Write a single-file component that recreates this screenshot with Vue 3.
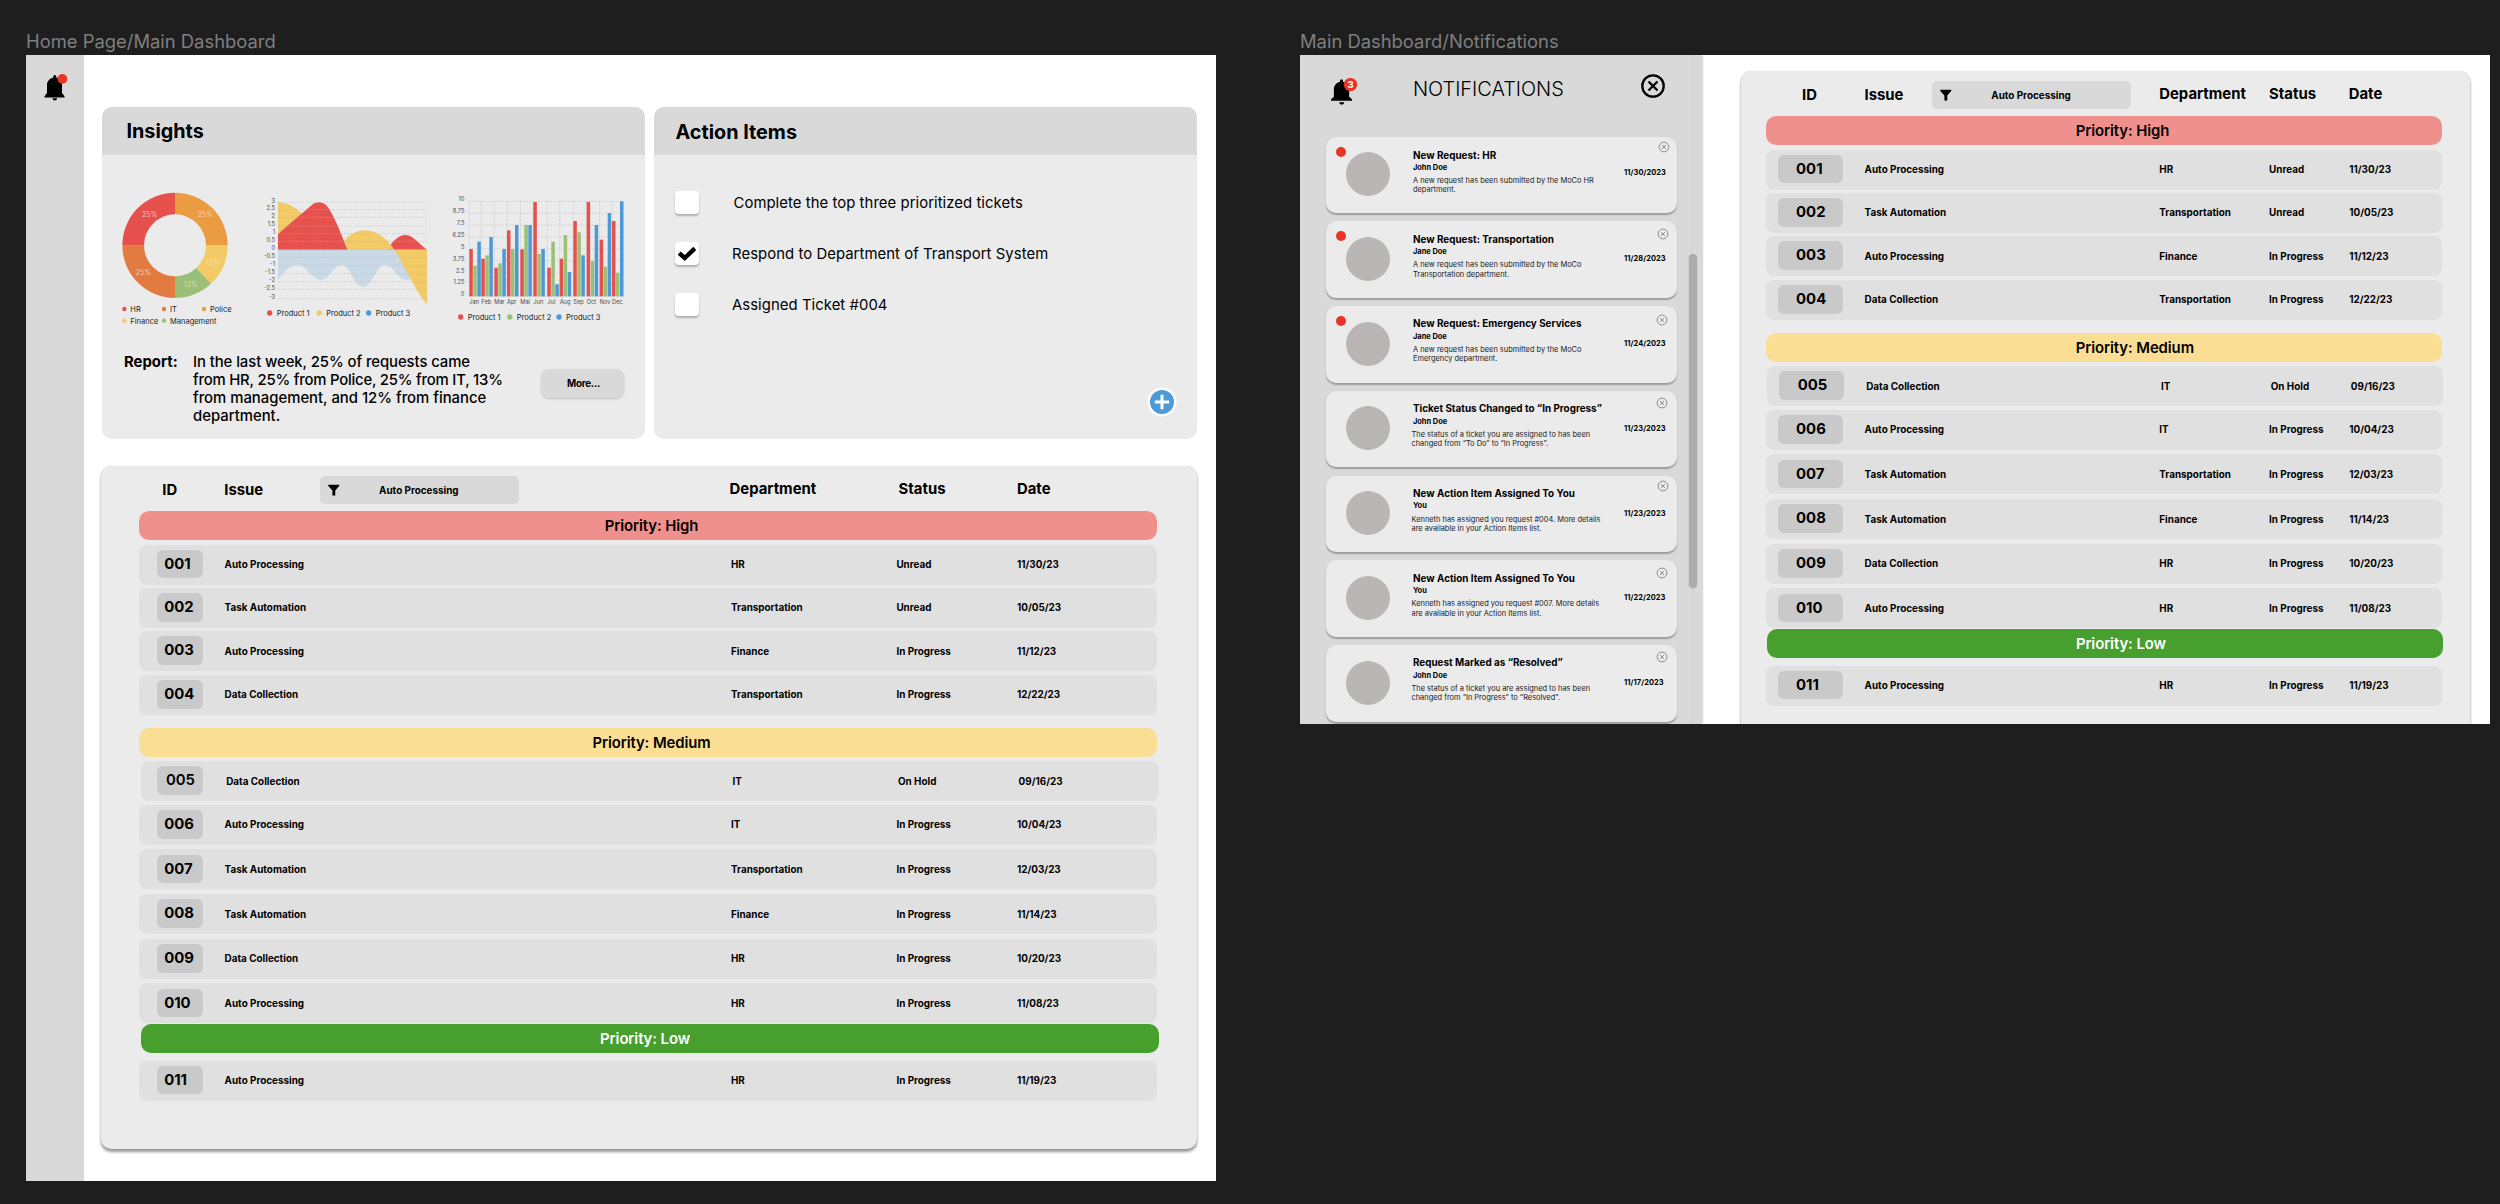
<script setup>
const tickets = [
  { kind: 'bar', tone: 'high', label: 'Priority: High', gap: 0 },
  { id: '001', issue: 'Auto Processing', dept: 'HR', status: 'Unread', date: '11/30/23', gap: 4.5 },
  { id: '002', issue: 'Task Automation', dept: 'Transportation', status: 'Unread', date: '10/05/23', gap: 3.4 },
  { id: '003', issue: 'Auto Processing', dept: 'Finance', status: 'In Progress', date: '11/12/23', gap: 3.4 },
  { id: '004', issue: 'Data Collection', dept: 'Transportation', status: 'In Progress', date: '12/22/23', gap: 3.4 },
  { kind: 'bar', tone: 'medium', label: 'Priority: Medium', gap: 13 },
  { id: '005', issue: 'Data Collection', dept: 'IT', status: 'On Hold', date: '09/16/23', gap: 4.6, shifted: true },
  { id: '006', issue: 'Auto Processing', dept: 'IT', status: 'In Progress', date: '10/04/23', gap: 3.4 },
  { id: '007', issue: 'Task Automation', dept: 'Transportation', status: 'In Progress', date: '12/03/23', gap: 4.7 },
  { id: '008', issue: 'Task Automation', dept: 'Finance', status: 'In Progress', date: '11/14/23', gap: 4.7 },
  { id: '009', issue: 'Data Collection', dept: 'HR', status: 'In Progress', date: '10/20/23', gap: 4.7 },
  { id: '010', issue: 'Auto Processing', dept: 'HR', status: 'In Progress', date: '11/08/23', gap: 4.7 },
  { kind: 'bar', tone: 'low', label: 'Priority: Low', gap: 1, shifted: true },
  { id: '011', issue: 'Auto Processing', dept: 'HR', status: 'In Progress', date: '11/19/23', gap: 7.2 },
]

const frames = [
  { name: 'home', title: 'Home Page/Main Dashboard' },
  { name: 'notes', title: 'Main Dashboard/Notifications' },
]

const todos = [
  { text: 'Complete the top three prioritized tickets', done: false, nudge: true },
  { text: 'Respond to Department of Transport System', done: true },
  { text: 'Assigned Ticket #004', done: false },
]

const notifications = [
  { title: 'New Request: HR', by: 'John Doe', l1: 'A new request has been submitted by the MoCo HR', l2: 'department.', date: '11/30/2023', unread: true, lift: 'first' },
  { title: 'New Request: Transportation', by: 'Jane Doe', l1: 'A new request has been submitted by the MoCo', l2: 'Transportation department.', date: '11/28/2023', unread: true, lift: 'second' },
  { title: 'New Request: Emergency Services', by: 'Jane Doe', l1: 'A new request has been submitted by the MoCo', l2: 'Emergency department.', date: '11/24/2023', unread: true, lift: 'third' },
  { title: 'Ticket Status Changed to “In Progress”', by: 'John Doe', l1: 'The status of a ticket you are assigned to has been', l2: 'changed from “To Do” to “In Progress”.', date: '11/23/2023' },
  { title: 'New Action Item Assigned To You', by: 'You', l1: 'Kenneth has assigned you request #004. More details', l2: 'are available in your Action Items list.', date: '11/23/2023', lift: 'fifth' },
  { title: 'New Action Item Assigned To You', by: 'You', l1: 'Kenneth has assigned you request #007. More details', l2: 'are available in your Action Items list.', date: '11/22/2023' },
  { title: 'Request Marked as “Resolved”', by: 'John Doe', l1: 'The status of a ticket you are assigned to has been', l2: 'changed from “In Progress” to “Resolved”.', date: '11/17/2023' },
]

const point = (r, deg) => {
  const a = ((deg - 90) * Math.PI) / 180
  return `${(224 + r * Math.cos(a)).toFixed(2)} ${(226 + r * Math.sin(a)).toFixed(2)}`
}
const arc = (from, to) =>
  `M${point(158, from)}A158 158 0 0 1 ${point(158, to)}L${point(93, to)}A93 93 0 0 0 ${point(93, from)}Z`
const slices = [
  { d: arc(0, 90), color: '#ec9c40', label: '25%', x: 315, y: 134 },
  { d: arc(90, 137), color: '#f2ca66', label: '12%', x: 338, y: 278 },
  { d: arc(137, 180), color: '#9abf77', label: '13%', x: 271, y: 342 },
  { d: arc(180, 270), color: '#e37b40', label: '25%', x: 129, y: 306 },
  { d: arc(270, 360), color: '#e6514d', label: '25%', x: 148, y: 134 },
]
const donutLegend = [
  { label: 'HR', color: '#e6514d', x: 72, y: 418 },
  { label: 'IT', color: '#e37b40', x: 191, y: 418 },
  { label: 'Police', color: '#ec9c40', x: 311, y: 418 },
  { label: 'Finance', color: '#f2ca66', x: 72, y: 453 },
  { label: 'Management', color: '#9abf77', x: 191, y: 453 },
]

const areaTicks = [
  ['3', 97], ['2.5', 119], ['2', 142], ['1.5', 168], ['1', 191], ['0.5', 214], ['0', 238],
  ['-0.5', 262], ['-1', 287], ['-1.5', 311], ['-2', 335], ['-2.5', 358], ['-3', 386],
]
const barTicks = ['10', '8.75', '7.5', '6.25', '5', '3.75', '2.5', '1.25', '0']
const months = [
  ['Jan', 147, [237, 287, 215]], ['Feb', 183, [266, 256, 201]], ['Mar', 222, [293, 280, 237]],
  ['Apr', 260, [181, 237, 165]], ['Mai', 300, [238, 165, 165]], ['Jun', 339, [96, 252, 237]],
  ['Jul', 381, [293, 215, 343]], ['Aug', 418, [266, 195, 306]], ['Sep', 459, [153, 187, 256]],
  ['Oct', 499, [96, 273, 165]], ['Nov', 538, [209, 290, 129]], ['Dec', 575, [153, 309, 94]],
]
const barColors = ['#e6514d', '#9abf77', '#4d98d6']
const products = ['Product 1', 'Product 2', 'Product 3']
</script>

<template>
  <div class="canvas">
    <section v-for="f in frames" :key="f.name" class="artboard" :class="f.name">
      <div class="artboard-name">{{ f.title }}</div>
      <div class="frame">
        <aside v-if="f.name === 'home'" class="rail">
          <svg class="bell" viewBox="0 0 24 28">
            <path d="M8.300 2.600a1.500 1.500 0 0 1 3 0v1C14.900 4.500 17 7.600 17 11v8l2.500 3.200v1.300H-.500v-1.300L2 19v-8C2 7.600 4.700 4.500 8.300 3.600zM7.500 24.300h4.600a2.300 2.300 0 0 1-4.600 0z" />
            <ellipse cx="17.400" cy="4.900" rx="4.900" ry="4.900" fill="#ea3424" />
          </svg>
        </aside>

        <aside v-else class="drawer">
          <header class="drawer-head">
            <svg class="bell" viewBox="0 0 28 28">
              <path d="M10 2.800a1.500 1.500 0 0 1 3 0v1C16.700 4.700 19.200 7.700 19.200 11.500v7.300l2.800 2.400v1.500H1v-1.500l2.900-2.400v-7.300C3.900 7.700 6.300 4.700 10 3.800zM9.200 24.200h5a2.500 2.500 0 0 1-5 0z" />
              <circle cx="20.500" cy="6.600" r="6.700" fill="#ea3424" />
              <text x="20.500" y="10" text-anchor="middle" class="bell-count">3</text>
            </svg>
            <h2>NOTIFICATIONS</h2>
            <svg class="dismiss" viewBox="0 0 24 24">
              <circle cx="12" cy="12" r="10.700" />
              <path d="M7.500 7.500l9 9M16.500 7.500l-9 9" />
            </svg>
          </header>
          <ul class="notes-list">
            <li v-for="(n, i) in notifications" :key="i" class="note" :class="n.lift">
              <i v-if="n.unread" class="dot"></i>
              <span class="avatar"></span>
              <div class="note-text">
                <h3>{{ n.title }}</h3>
                <h4>{{ n.by }}</h4>
                <p :class="{ out: i > 2 }">{{ n.l1 }}<br />{{ n.l2 }}</p>
              </div>
              <time>{{ n.date }}</time>
              <svg class="note-x" viewBox="0 0 12 12">
                <circle cx="6" cy="6" r="4.900" />
                <path d="M4 4l4 4M8 4l-4 4" />
              </svg>
            </li>
          </ul>
          <div class="track"><div class="thumb"></div></div>
        </aside>

        <main>
          <div v-if="f.name === 'home'" class="cards">
            <article class="card">
              <h2 class="card-title">Insights</h2>
              <div class="charts">
                <svg class="chart donut" viewBox="50 60 350 410">
                  <path v-for="(s, i) in slices" :key="i" :d="s.d" :fill="s.color" />
                  <text v-for="(s, i) in slices" :key="'t' + i" :x="s.x" :y="s.y + 8" class="pct">{{ s.label }}</text>
                  <g v-for="l in donutLegend" :key="l.label">
                    <circle :cx="l.x" :cy="l.y - 1" r="6.500" :fill="l.color" />
                    <text :x="l.x + 18" :y="l.y + 9" class="key">{{ l.label }}</text>
                  </g>
                </svg>
                <svg class="chart area" viewBox="490 60 500 410">
                  <path fill="#f2ca66" d="M535 97C562 97 585 110 608 132L720 239H535Z" />
                  <path fill="#c9dae6" d="M535 239V330C550 310 568 285 594 285C622 285 636 330 664 330C690 330 700 285 726 285C752 285 762 351 790 351C820 351 828 285 856 285C884 285 892 330 920 330L940 328L900 239Z" />
                  <path fill="#e6514d" d="M535 192L640 102C652 94 668 94 680 106C706 138 722 190 744 239H535Z" />
                  <path fill="#e6514d" d="M862 239C880 214 895 195 918 195C940 195 958 222 982 239Z" />
                  <path fill="#f2ca66" d="M734 212C752 192 770 181 796 181C835 181 866 212 884 239H982V403C958 376 940 340 925 311C908 280 895 256 884 239H744Z" />
                  <line v-for="t in areaTicks" :key="t[0]" x1="536" x2="982" :y1="t[1]" :y2="t[1]" class="grid" />
                  <text v-for="t in areaTicks" :key="'l' + t[0]" x="526" :y="t[1] + 1" class="tick">{{ t[0] }}</text>
                  <g v-for="(p, i) in products" :key="p">
                    <circle :cx="510 + i * 148.500" cy="429" r="8" :fill="['#e6514d', '#f2ca66', '#4d98d6'][i]" />
                    <text :x="531 + i * 148.500" y="437" class="key">{{ p }}</text>
                  </g>
                </svg>
                <svg class="chart bars" viewBox="80 60 540 410">
                  <line v-for="(t, i) in barTicks" :key="t" x1="147" x2="609" :y1="94 + i * 35.600" :y2="94 + i * 35.600" class="grid" />
                  <line v-for="m in months" :key="m[0]" :x1="m[1]" :x2="m[1]" y1="94" y2="379" class="grid" />
                  <text v-for="(t, i) in barTicks" :key="'l' + t" x="132" :y="94 + i * 35.600" class="tick">{{ t }}</text>
                  <g v-for="m in months" :key="'b' + m[0]">
                    <rect v-for="(y, k) in m[2]" :key="k" :x="m[1] + k * 12" :y="y" width="10.500" :height="379 - y" :fill="barColors[k]" />
                    <text :x="m[1]" y="403" class="month">{{ m[0] }}</text>
                  </g>
                  <g v-for="(p, i) in products" :key="p">
                    <circle :cx="121 + i * 147.500" cy="441" r="8" :fill="barColors[i]" />
                    <text :x="142 + i * 147.500" y="450" class="key">{{ p }}</text>
                  </g>
                </svg>
              </div>
              <div class="report">
                <strong>Report:</strong>
                <p>
                  <span class="snug">In the last week, 25% of requests came</span>
                  <span class="tight">from HR, 25% from Police, 25% from IT, 13%</span>
                  <span>from management, and 12% from finance</span>
                  <span>department.</span>
                </p>
                <button class="more">More...</button>
              </div>
            </article>

            <article class="card">
              <h2 class="card-title actions-title">Action Items</h2>
              <ul class="todos">
                <li v-for="t in todos" :key="t.text">
                  <span class="check">
                    <svg v-if="t.done" viewBox="0 0 24 24"><path d="M2.700 12.700L5.600 9.600L9.800 13.100L18.300 4.800L21.300 8L9.800 19Z" /></svg>
                  </span>
                  <span :class="{ nudge: t.nudge }">{{ t.text }}</span>
                </li>
              </ul>
              <svg class="add" viewBox="0 0 30 30">
                <circle cx="15" cy="15" r="14.500" fill="#fff" />
                <circle cx="15" cy="15" r="12" fill="#4d9ad9" />
                <path d="M15 7.800v14.400M7.800 15h14.400" stroke="#fff" stroke-width="3" />
              </svg>
            </article>
          </div>

          <div class="board">
            <div class="board-head">
              <span>ID</span>
              <span>Issue</span>
              <div class="filter">
                <svg viewBox="0 0 12 12"><path d="M.3.500h11.400v1.300L7.600 6.600v5.200H4.600V6.600L.3 1.800z" /></svg>
                <span>Auto Processing</span>
              </div>
              <span class="up">Department</span>
              <span class="up">Status</span>
              <span class="up">Date</span>
            </div>
            <div
              v-for="t in tickets"
              :key="t.id || t.label"
              :class="[t.kind === 'bar' ? 'priority' : 'row', t.tone, { shifted: t.shifted }]"
              :style="{ marginTop: t.gap + 'px' }"
            >
              <span v-if="t.kind === 'bar'">{{ t.label }}</span>
              <template v-else>
                <b class="chip"><span>{{ t.id }}</span></b>
                <span>{{ t.issue }}</span>
                <span>{{ t.dept }}</span>
                <span>{{ t.status }}</span>
                <span>{{ t.date }}</span>
              </template>
            </div>
          </div>
        </main>
      </div>
    </section>
  </div>
</template>

<style>
body {
  margin: 0;
  background: #1e1e1e;
}
</style>

<style scoped>
.canvas {
  box-sizing: border-box;
  width: 2500px;
  height: 1204px;
  padding: 27px 10px 0 26px;
  display: flex;
  gap: 84px;
  align-items: flex-start;
  background: #1e1e1e;
  font-family: Inter, "Liberation Sans", sans-serif;
  color: #000;
  overflow: hidden;
}
.canvas *,
.canvas *::before {
  box-sizing: border-box;
}
h2, h3, h4, p, ul {
  margin: 0;
  padding: 0;
  list-style: none;
}
.artboard {
  width: 1190px;
}
.artboard-name {
  height: 28px;
  line-height: 28px;
  font-size: 18.400px;
  color: #7f7f7f;
  white-space: nowrap;
}
.frame {
  display: flex;
  background: #fff;
  overflow: hidden;
}
.home .frame {
  height: 1126px;
}
.notes .frame {
  height: 669px;
}
.rail {
  width: 58px;
  background: #d9d9d9;
  padding: 19px 0 0 19px;
}
.rail .bell {
  width: 24px;
  height: 28px;
  display: block;
  overflow: visible;
}
main {
  flex: 1;
  min-width: 0;
}
.home main {
  padding: 51.500px 19px 0 17px;
}
.notes main {
  padding: 16px 20.500px 0 38.500px;
}

/* summary cards */
.cards {
  display: flex;
  gap: 9.500px;
  height: 332px;
  margin: 0 0 27.500px .500px;
}
.card {
  flex: 1;
  position: relative;
  display: flex;
  flex-direction: column;
  background: #ebebeb;
  border-radius: 10px;
  overflow: hidden;
}
.card-title {
  height: 48.500px;
  padding-left: 25px;
  background: #d9d9d9;
  font-size: 19.800px;
  font-weight: 700;
  line-height: 48px;
}
.actions-title {
  padding-left: 21.500px;
  line-height: 50px;
}
.charts {
  display: flex;
  padding: 35px 0 0 15.200px;
}
.chart {
  height: 136.700px;
  flex: none;
  font-family: Inter, sans-serif;
}
.donut { width: 116.700px; }
.area { width: 166.700px; margin-left: 30px; }
.bars { width: 180px; margin-left: 16.700px; }
.pct {
  font-size: 21px;
  fill: #ebe3d8;
  fill-opacity: .8;
  text-anchor: middle;
}
.key {
  font-size: 22.500px;
  fill: #222;
}
.tick {
  font-size: 17px;
  fill: #4a4a4a;
  text-anchor: end;
}
.month {
  font-size: 17px;
  fill: #4a4a4a;
}
.grid {
  stroke: #b4b4b4;
  stroke-opacity: .75;
  stroke-width: 2;
  stroke-dasharray: 5 4;
}
.report {
  display: flex;
  padding: 26.800px 0 0 22.500px;
  font-size: 14.870px;
  line-height: 18px;
}
.report strong {
  width: 69px;
  font-weight: 700;
}
.report p {
  width: 348px;
  font-weight: 500;
  white-space: nowrap;
}
.report p span { display: block; }
.snug { letter-spacing: -.070px; }
.tight { letter-spacing: -.200px; }
.more {
  width: 83px;
  height: 29px;
  margin-top: 15.500px;
  padding: 0 0 0 2px;
  border: 0;
  border-radius: 8px;
  background: #d9d9d9;
  box-shadow: 0 1px 2px rgba(0, 0, 0, .18);
  color: #000;
  font: 700 9.900px Inter, sans-serif;
  letter-spacing: -.250px;
}
.todos {
  padding: 36px 0 0 21px;
}
.todos li {
  display: flex;
  align-items: center;
  height: 23px;
  margin-bottom: 28px;
  font-size: 14.870px;
  letter-spacing: .060px;
}
.check {
  width: 24px;
  height: 23px;
  margin-right: 33px;
  border-radius: 4px;
  background: #fff;
  box-shadow: 0 2px 2px rgba(0, 0, 0, .25);
}
.check svg {
  display: block;
  width: 24px;
  height: 24px;
}
.nudge { margin-left: 1.500px; }
.add {
  position: absolute;
  right: 20.500px;
  bottom: 21.500px;
  width: 30px;
  height: 30px;
}

/* ticket board */
.board {
  background: #ebebeb;
  border-radius: 10px;
  box-shadow: 0 3px 3px rgba(0, 0, 0, .4), 0 0 1px rgba(0, 0, 0, .25);
}
.home .board {
  height: 683px;
  padding: 0 40px 0 38px;
}
.notes .board {
  height: 683px;
  padding: 0 27.700px 0 24.800px;
}
.board-head,
.row {
  display: grid;
  align-items: center;
  white-space: nowrap;
}
.board-head {
  height: 45px;
  font-size: 14.870px;
  font-weight: 700;
  padding-top: 3px;
}
.home .board-head {
  grid-template-columns: 62px 95.300px 410px 169px 118.400px auto;
  padding-left: 23.300px;
}
.notes .board-head {
  grid-template-columns: 62.400px 67.300px 227.500px 109.800px 79.700px auto;
  padding-left: 36.300px;
}
.up {
  transform: translateY(-1px);
}
.filter {
  display: flex;
  align-items: center;
  width: 199.500px;
  height: 28px;
  margin-bottom: 1px;
  padding-left: 8.500px;
  border-radius: 5px;
  background: #d9d9d9;
  font-size: 9.900px;
  font-weight: 700;
}
.filter svg {
  width: 11.500px;
  height: 12px;
  margin-right: 39.500px;
}
.row {
  height: 40px;
  padding-bottom: 1px;
  border-radius: 8px;
  background: #e0e0e0;
  font-size: 9.900px;
  font-weight: 700;
}
.home .row {
  grid-template-columns: 68.100px 506.400px 165.400px 120.600px auto;
  padding-left: 17.500px;
}
.notes .row {
  grid-template-columns: 86.800px 294.700px 109.800px 80.200px auto;
  padding-left: 12px;
}
.chip {
  display: block;
  height: 28.700px;
  width: 46px;
  padding-left: 7.700px;
  border-radius: 6px;
  background: #c9c9c9;
  font-size: 14.870px;
  font-weight: 700;
  line-height: 28px;
}
.notes .chip {
  width: 65px;
  padding-left: 18.300px;
}
.priority {
  height: 29px;
  border-radius: 10px;
  font-size: 14.870px;
  font-weight: 600;
  line-height: 30px;
  letter-spacing: -.080px;
  text-align: center;
}
.home .priority { padding-left: 7px; }
.notes .priority {
  text-align: left;
  padding-left: 310px;
}
.high { background: #f0908c; }
.medium { background: #fade94; }
.low {
  background: #479f2d;
  color: #fff;
}
.shifted {
  margin-left: 1.600px;
  margin-right: -1.600px;
}
.home .shifted .chip {
  margin-left: -1.600px;
  padding-left: 9.500px;
  font-weight: 600;
}
.home .low {
  padding-left: 0;
  padding-right: 9px;
}
.notes .low {
  padding-left: 308.500px;
}

/* notification drawer */
.drawer {
  position: relative;
  width: 402.500px;
  flex: none;
  background: #d9d9d9;
  border-radius: 0 4px 4px 0;
  box-shadow: 0 0 1px rgba(0, 0, 0, .3);
}
.drawer-head {
  display: flex;
  align-items: flex-start;
  height: 81.700px;
  padding: 22.500px 0 0 30px;
}
.drawer-head .bell {
  width: 28px;
  height: 28px;
}
.bell-count {
  fill: #fff;
  font: 700 9.500px Inter, sans-serif;
}
.drawer-head h2 {
  width: 152px;
  margin-left: 55px;
  font-size: 19.900px;
  font-weight: 300;
  line-height: 22px;
  white-space: nowrap;
}
.dismiss {
  width: 24px;
  height: 24px;
  margin: -4px 0 0 75.500px;
  fill: none;
  stroke: #000;
  stroke-width: 2.300;
}
.notes-list {
  display: flex;
  flex-direction: column;
  gap: 8.250px;
  width: 351px;
  margin-left: 26px;
}
.note {
  position: relative;
  display: flex;
  flex: none;
  height: 76.500px;
  border-radius: 10px;
  background: #ebebeb;
  box-shadow: 0 1.500px 1.500px rgba(0, 0, 0, .28);
  padding-left: 20.300px;
  white-space: nowrap;
}
.dot {
  position: absolute;
  left: 10.300px;
  top: 10px;
  width: 10px;
  height: 10px;
  border-radius: 50%;
  background: #ea3424;
}
.avatar {
  width: 44px;
  height: 44px;
  margin-top: 15.500px;
  border-radius: 50%;
  background: #bab6b6;
}
.note-text {
  width: 211px;
  margin-left: 22.700px;
  padding-top: 11.200px;
}
.first .note-text { padding-top: 12.300px; }
.note h3 {
  font-size: 9.900px;
  font-weight: 700;
  line-height: 12px;
}
.note h4 {
  margin-top: 2.500px;
  font-size: 7.430px;
  font-weight: 700;
  line-height: 10px;
}
.note p {
  margin-top: 3.200px;
  font-size: 7.430px;
  line-height: 9.300px;
  color: #222;
}
.first p { margin-top: 2.200px; }
.note p.out { margin-left: -1.500px; }
.note time {
  margin-top: 33px;
  font-size: 7.430px;
  font-weight: 700;
  line-height: 10px;
  letter-spacing: .080px;
}
.first time { margin-top: 31.800px; }
.note-x {
  position: absolute;
  left: 330px;
  top: 6.200px;
  width: 12px;
  height: 12px;
  fill: none;
  stroke: #8f8f8f;
  stroke-width: 1;
}
.first .note-x { left: 332.300px; top: 4.800px; }
.second .note-x { left: 331.200px; }
.third .note-x { top: 8px; }
.fifth .note-x { left: 331.200px; top: 4.800px; }
.track {
  position: absolute;
  left: 392px;
  top: 0;
  bottom: 0;
  width: 1px;
  background: #cfcfcf;
}
.thumb {
  position: absolute;
  left: -3.500px;
  top: 199px;
  width: 8px;
  height: 332.700px;
  border-radius: 4px;
  background: #adabab;
  box-shadow: 0 1px 1.500px rgba(0, 0, 0, .25);
}
</style>
